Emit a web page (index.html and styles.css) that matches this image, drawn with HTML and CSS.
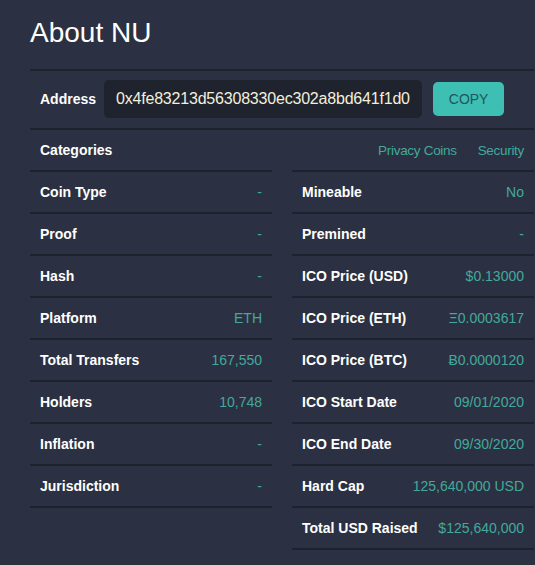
FILE: index.html
```html
<!DOCTYPE html>
<html>
  <head>
    <meta charset="UTF-8" />
    <meta name="viewport" content="width=device-width, initial-scale=1.0" />
    <link rel="stylesheet" href="styles.css">
    <title>About NU</title>
  </head>
  <body>
    <div class="about">
      <h1 class="title">About NU</h1>

      <div class="address-row">
        <span class="label">Address</span>
        <div class="address-box">0x4fe83213d56308330ec302a8bd641f1d0</div>
        <button class="copy-btn">COPY</button>
      </div>

      <div class="cat-row">
        <span class="label">Categories</span>
        <div class="cat-links">
          <a href="#">Privacy Coins</a>
          <a href="#">Security</a>
        </div>
      </div>

      <div class="grid-2">
        <div class="col">
          <div class="row"><span class="label">Coin Type</span><span class="value">-</span></div>
          <div class="row"><span class="label">Proof</span><span class="value">-</span></div>
          <div class="row"><span class="label">Hash</span><span class="value">-</span></div>
          <div class="row"><span class="label">Platform</span><span class="value">ETH</span></div>
          <div class="row"><span class="label">Total Transfers</span><span class="value">167,550</span></div>
          <div class="row"><span class="label">Holders</span><span class="value">10,748</span></div>
          <div class="row"><span class="label">Inflation</span><span class="value">-</span></div>
          <div class="row"><span class="label">Jurisdiction</span><span class="value">-</span></div>
        </div>
        <div class="col">
          <div class="row"><span class="label">Mineable</span><span class="value">No</span></div>
          <div class="row"><span class="label">Premined</span><span class="value">-</span></div>
          <div class="row"><span class="label">ICO Price (USD)</span><span class="value">$0.13000</span></div>
          <div class="row"><span class="label">ICO Price (ETH)</span><span class="value">Ξ0.0003617</span></div>
          <div class="row"><span class="label">ICO Price (BTC)</span><span class="value">Ƀ0.0000120</span></div>
          <div class="row"><span class="label">ICO Start Date</span><span class="value">09/01/2020</span></div>
          <div class="row"><span class="label">ICO End Date</span><span class="value">09/30/2020</span></div>
          <div class="row"><span class="label">Hard Cap</span><span class="value">125,640,000 USD</span></div>
          <div class="row"><span class="label">Total USD Raised</span><span class="value">$125,640,000</span></div>
        </div>
      </div>
    </div>
  </body>
</html>
```

FILE: styles.css
```css
body {
  background-color: #2b3142;
  color: #ffffff;
  margin: 0px;
  font-family: "Liberation Sans", Arial, sans-serif;
  font-size: 14px;
}

.about {
  width: 504px;
  margin-left: 30px;
}

.title {
  font-size: 28px;
  font-weight: normal;
  line-height: 32px;
  margin: 17px 0px 20px 0px;
}

.label {
  font-weight: bold;
  color: #ffffff;
}

.value {
  color: #43a99c;
}

.address-row {
  display: flex;
  align-items: center;
  border-top: 2px solid #1e222d;
  padding: 9px 10px 10px 10px;
}

.address-row .label {
  margin-right: 8px;
}

.address-box {
  background-color: #1e232e;
  color: #f4eedc;
  font-size: 16px;
  letter-spacing: -0.2px;
  line-height: 38px;
  padding: 0px 12px;
  border-radius: 5px;
}

.copy-btn {
  margin-left: 11px;
  background-color: #3dbfb3;
  color: #24545a;
  border: none;
  border-radius: 5px;
  font-family: "Liberation Sans", Arial, sans-serif;
  font-size: 14px;
  height: 34px;
  padding: 0px 16px;
}

.cat-row {
  display: flex;
  justify-content: space-between;
  align-items: center;
  border-top: 2px solid #1e222d;
  height: 40px;
  padding: 0px 10px;
}

.cat-links a {
  color: #43a99c;
  text-decoration: none;
  font-size: 13.5px;
  letter-spacing: -0.3px;
  margin-left: 17px;
}

.grid-2 {
  display: grid;
  grid-template-columns: 1fr 1fr;
  column-gap: 20px;
}

.row {
  display: flex;
  justify-content: space-between;
  align-items: center;
  height: 40px;
  padding: 0px 10px;
  border-top: 2px solid #1e222d;
}

.row:last-child {
  border-bottom: 2px solid #1e222d;
}
```
